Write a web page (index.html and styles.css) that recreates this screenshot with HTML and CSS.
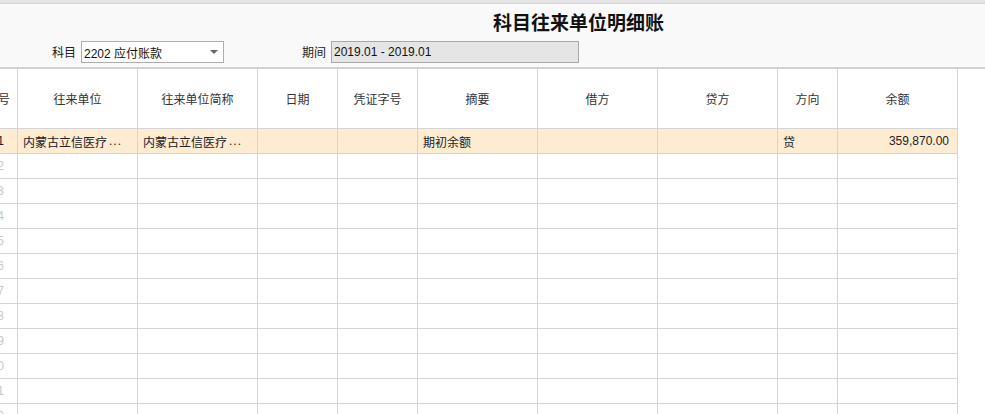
FILE: index.html
```html
<!DOCTYPE html>
<html lang="zh-CN">
<head>
<meta charset="utf-8">
<link rel="stylesheet" href="styles.css">
</head>
<body>
<div class="topstrip"></div>
<div class="panel">
  <div class="title">科目往来单位明细账</div>
  <div class="controls">
    <span class="label">科目</span>
    <div class="select"><span>2202 应付账款</span><span class="arrow"></span></div>
    <span class="label label-period">期间</span>
    <div class="period">2019.01 - 2019.01</div>
  </div>
</div>
<div class="grid">
  <div class="row head">
    <div class="c c0">号</div>
    <div class="c w120">往来单位</div>
    <div class="c w120">往来单位简称</div>
    <div class="c w80">日期</div>
    <div class="c w80">凭证字号</div>
    <div class="c w120">摘要</div>
    <div class="c w120">借方</div>
    <div class="c w120">贷方</div>
    <div class="c w60">方向</div>
    <div class="c w120">余额</div>
  </div>
  <div class="row sel">
    <div class="c c0 num cur">1</div>
    <div class="c w120 l">内蒙古立信医疗<span class="ell">...</span></div>
    <div class="c w120 l">内蒙古立信医疗<span class="ell">...</span></div>
    <div class="c w80"></div>
    <div class="c w80"></div>
    <div class="c w120 l">期初余额</div>
    <div class="c w120"></div>
    <div class="c w120"></div>
    <div class="c w60 l">贷</div>
    <div class="c w120 r">359,870.00</div>
  </div>
  <div class="row"><div class="c c0 num">2</div><div class="c w120"></div><div class="c w120"></div><div class="c w80"></div><div class="c w80"></div><div class="c w120"></div><div class="c w120"></div><div class="c w120"></div><div class="c w60"></div><div class="c w120"></div></div>
  <div class="row"><div class="c c0 num">3</div><div class="c w120"></div><div class="c w120"></div><div class="c w80"></div><div class="c w80"></div><div class="c w120"></div><div class="c w120"></div><div class="c w120"></div><div class="c w60"></div><div class="c w120"></div></div>
  <div class="row"><div class="c c0 num">4</div><div class="c w120"></div><div class="c w120"></div><div class="c w80"></div><div class="c w80"></div><div class="c w120"></div><div class="c w120"></div><div class="c w120"></div><div class="c w60"></div><div class="c w120"></div></div>
  <div class="row"><div class="c c0 num">5</div><div class="c w120"></div><div class="c w120"></div><div class="c w80"></div><div class="c w80"></div><div class="c w120"></div><div class="c w120"></div><div class="c w120"></div><div class="c w60"></div><div class="c w120"></div></div>
  <div class="row"><div class="c c0 num">6</div><div class="c w120"></div><div class="c w120"></div><div class="c w80"></div><div class="c w80"></div><div class="c w120"></div><div class="c w120"></div><div class="c w120"></div><div class="c w60"></div><div class="c w120"></div></div>
  <div class="row"><div class="c c0 num">7</div><div class="c w120"></div><div class="c w120"></div><div class="c w80"></div><div class="c w80"></div><div class="c w120"></div><div class="c w120"></div><div class="c w120"></div><div class="c w60"></div><div class="c w120"></div></div>
  <div class="row"><div class="c c0 num">8</div><div class="c w120"></div><div class="c w120"></div><div class="c w80"></div><div class="c w80"></div><div class="c w120"></div><div class="c w120"></div><div class="c w120"></div><div class="c w60"></div><div class="c w120"></div></div>
  <div class="row"><div class="c c0 num">9</div><div class="c w120"></div><div class="c w120"></div><div class="c w80"></div><div class="c w80"></div><div class="c w120"></div><div class="c w120"></div><div class="c w120"></div><div class="c w60"></div><div class="c w120"></div></div>
  <div class="row"><div class="c c0 num">10</div><div class="c w120"></div><div class="c w120"></div><div class="c w80"></div><div class="c w80"></div><div class="c w120"></div><div class="c w120"></div><div class="c w120"></div><div class="c w60"></div><div class="c w120"></div></div>
  <div class="row"><div class="c c0 num">11</div><div class="c w120"></div><div class="c w120"></div><div class="c w80"></div><div class="c w80"></div><div class="c w120"></div><div class="c w120"></div><div class="c w120"></div><div class="c w60"></div><div class="c w120"></div></div>
  <div class="row"><div class="c c0 num">12</div><div class="c w120"></div><div class="c w120"></div><div class="c w80"></div><div class="c w80"></div><div class="c w120"></div><div class="c w120"></div><div class="c w120"></div><div class="c w60"></div><div class="c w120"></div></div>
</div>
</body>
</html>
```

FILE: styles.css
```css
html, body {
  margin: 0;
  padding: 0;
  background: #ffffff;
  overflow: hidden;
  height: 414px;
}
body {
  font-family: "Noto Sans CJK SC", "Liberation Sans", sans-serif;
  font-size: 12px;
  color: #222;
}
.topstrip {
  height: 3px;
  background: #e4e4e4;
  border-bottom: 1px solid #d4d4d4;
}
.panel {
  height: 65px;
  background: #f9f9f9;
  border-bottom: 2px solid #d2d2d2;
  box-sizing: border-box;
  padding-top: 6px;
}
.title {
  padding-left: 493px;
  font-size: 19px;
  font-weight: bold;
  line-height: 24px;
  color: #111;
}
.controls {
  display: flex;
  align-items: center;
  margin-top: 7px;
  padding-left: 52px;
  height: 22px;
}
.label {
  width: 24px;
  margin-right: 5px;
  line-height: 22px;
  color: #222;
}
.label-period {
  margin-left: 78px;
}
.select {
  width: 143px;
  height: 22px;
  box-sizing: border-box;
  border: 1px solid #adadad;
  background: #fff;
  display: flex;
  align-items: center;
  justify-content: space-between;
  padding: 0 5px 0 2px;
  font-family: "Liberation Sans", "Noto Sans CJK SC", sans-serif;
  color: #111;
}
.arrow {
  width: 0;
  height: 0;
  border-left: 4px solid transparent;
  border-right: 4px solid transparent;
  border-top: 4px solid #666;
}
.period {
  width: 248px;
  height: 22px;
  box-sizing: border-box;
  border: 1px solid #a8a8a8;
  background: #e5e5e5;
  padding-left: 2px;
  line-height: 20px;
  font-family: "Liberation Sans", sans-serif;
  color: #111;
}
.grid {
  display: flex;
  flex-direction: column;
}
.row {
  display: flex;
  height: 25px;
}
.row.head {
  height: 60px;
}
.row.sel .c {
  background: #fdebd2;
}
.c {
  box-sizing: border-box;
  border-right: 1px solid #d4d4d4;
  border-bottom: 1px solid #d4d4d4;
  display: flex;
  align-items: center;
  justify-content: center;
  white-space: nowrap;
  overflow: hidden;
  color: #222;
}
.head .c {
  color: #333;
}
.c0 {
  width: 18px;
  justify-content: flex-end;
  padding-right: 7px;
}
.num {
  padding-right: 13px;
  font-family: "Liberation Sans", sans-serif;
  color: #c8c8c8;
}
.num.cur {
  color: #222;
}
.w120 { width: 120px; }
.w80 { width: 80px; }
.w60 { width: 60px; }
.l {
  justify-content: flex-start;
  padding-left: 5px;
}
.ell {
  font-family: "Liberation Sans", sans-serif;
  margin-left: 2px;
  letter-spacing: 1px;
}
.r {
  justify-content: flex-end;
  padding-right: 8px;
  font-family: "Liberation Sans", sans-serif;
}
```
